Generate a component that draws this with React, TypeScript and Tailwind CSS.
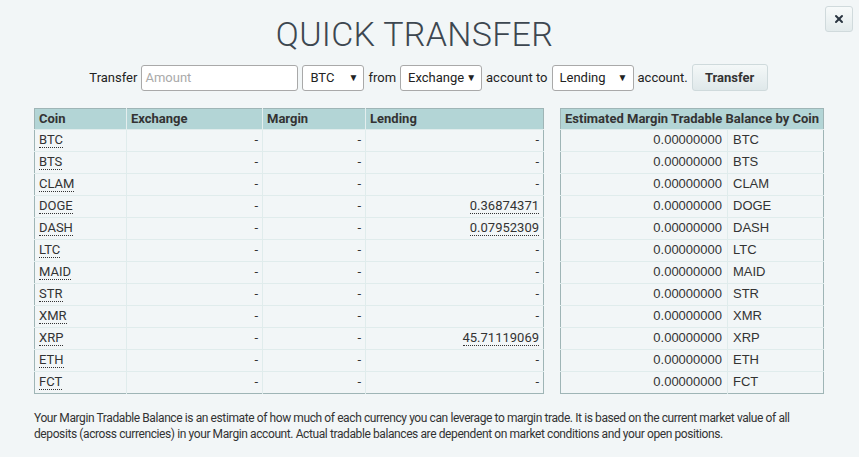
import { X } from 'lucide-react';

const rows: { coin: string; lending: string }[] = [
  { coin: 'BTC', lending: '-' },
  { coin: 'BTS', lending: '-' },
  { coin: 'CLAM', lending: '-' },
  { coin: 'DOGE', lending: '0.36874371' },
  { coin: 'DASH', lending: '0.07952309' },
  { coin: 'LTC', lending: '-' },
  { coin: 'MAID', lending: '-' },
  { coin: 'STR', lending: '-' },
  { coin: 'XMR', lending: '-' },
  { coin: 'XRP', lending: '45.71119069' },
  { coin: 'ETH', lending: '-' },
  { coin: 'FCT', lending: '-' },
];

function Select({ value, width }: { value: string; width: string }) {
  return (
    <div
      className={`${width} h-[26px] flex items-center justify-between pl-[7px] pr-[5px] bg-white border border-[#a9a9a9] rounded-[3px] text-[13px] text-[#222]`}
    >
      <span>{value}</span>
      <span className="text-[10px] leading-none">▼</span>
    </div>
  );
}

export default function App() {
  return (
    <div
      className="w-[859px] h-[457px] bg-[#f2f6f7] relative text-[#333]"
      style={{ fontFamily: 'Roboto, "Liberation Sans", sans-serif' }}
    >
      <button className="absolute left-[825px] top-[6px] w-[28px] h-[26px] rounded-[3px] border border-[#d0dadc] bg-gradient-to-b from-[#f7fafa] to-[#e3ebec] flex items-center justify-center">
        <X size={12} strokeWidth={4} className="text-[#2a3540]" />
      </button>

      <div className="pt-[14px] flex justify-center pr-[30px]">
        <h1 className="text-[34px] leading-[40px] font-light text-[#3d4750] tracking-[0.3px]">QUICK TRANSFER</h1>
      </div>

      <div className="mt-[10px] flex items-center justify-center gap-[4px] text-[13px] text-[#222] pr-[2px]">
        <span>Transfer</span>
        <div className="w-[157px] h-[26px] bg-white border border-[#a9a9a9] rounded-[3px] flex items-center px-[3px] text-[13px] text-[#aaa]">
          Amount
        </div>
        <Select value="BTC" width="w-[62px]" />
        <span>from</span>
        <Select value="Exchange" width="w-[82px]" />
        <span>account to</span>
        <Select value="Lending" width="w-[82px]" />
        <span>account.</span>
        <button className="w-[76px] h-[27px] rounded-[3px] border border-[#cfdadc] bg-gradient-to-b from-[#f4f8f8] to-[#dfe8ea] text-[13px] font-bold text-[#333]">
          Transfer
        </button>
      </div>

      <div className="mt-[17px] px-[34px] flex gap-[16px] text-[13px]">
        <table className="w-[510px] border border-[#9fb5b6] border-collapse">
          <thead>
            <tr className="bg-[#b3d5d6] h-[20px] text-left font-bold">
              <th className="w-[92px] pl-[4px] border-r border-[#e4eeee]">Coin</th>
              <th className="w-[136px] pl-[4px] border-r border-[#e4eeee]">Exchange</th>
              <th className="w-[103px] pl-[4px] border-r border-[#e4eeee]">Margin</th>
              <th className="pl-[4px]">Lending</th>
            </tr>
          </thead>
          <tbody>
            {rows.map((r) => (
              <tr key={r.coin} className="h-[22px] border-t border-[#e0ecec]">
                <td className="pl-[4px] border-r border-[#e0ecec]">
                  <span className="border-b border-dotted border-[#333] leading-[14px] inline-block">{r.coin}</span>
                </td>
                <td className="text-right pr-[4px] border-r border-[#e0ecec]">-</td>
                <td className="text-right pr-[4px] border-r border-[#e0ecec]">-</td>
                <td className="text-right pr-[4px]">
                  {r.lending === '-' ? (
                    '-'
                  ) : (
                    <span className="border-b border-dotted border-[#333] leading-[14px] inline-block">{r.lending}</span>
                  )}
                </td>
              </tr>
            ))}
          </tbody>
        </table>

        <table className="w-[264px] border border-[#9fb5b6] border-collapse self-start">
          <thead>
            <tr className="bg-[#b3d5d6] h-[20px]">
              <th colSpan={2} className="text-left pl-[4px] font-bold whitespace-nowrap">
                Estimated Margin Tradable Balance by Coin
              </th>
            </tr>
          </thead>
          <tbody style={{ fontFamily: '"Liberation Sans", Arial, sans-serif' }}>
            {rows.map((r) => (
              <tr key={r.coin} className="h-[22px] border-t border-[#e0ecec]">
                <td className="w-[167px] text-right pr-[5px] border-r border-[#e0ecec]">0.00000000</td>
                <td className="pl-[5px]">{r.coin}</td>
              </tr>
            ))}
          </tbody>
        </table>
      </div>

      <p className="mt-[16px] ml-[34px] w-[780px] text-[12px] leading-[16px] text-[#333] tracking-[-0.4px]">
        Your Margin Tradable Balance is an estimate of how much of each currency you can leverage to margin trade. It is based on the current market value of all deposits (across currencies) in your Margin account. Actual tradable balances are dependent on market conditions and your open positions.
      </p>
    </div>
  );
}
